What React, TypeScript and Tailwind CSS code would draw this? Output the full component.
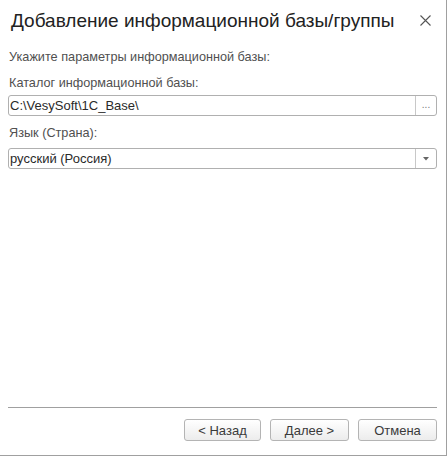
// Диалог добавления информационной базы (мастер, шаг параметров)

const font = "font-['Liberation_Sans',Arial,sans-serif]";

function WizardButton({ children, wide = 79 }: { children: React.ReactNode; wide?: number }) {
	return (
		<button
			type="button"
			className={`h-[22px] ${wide === 77 ? "w-[77px]" : "w-[79px]"} rounded-[3px] border border-[#b4b4b4] bg-gradient-to-b from-white to-[#ececec] text-[13px] leading-none text-[#3a3a3a]`}
		>
			{children}
		</button>
	);
}

function Field({
	value,
	addon,
}: {
	value: string;
	addon: React.ReactNode;
}) {
	return (
		<div className="flex h-[21px] mr-[9px] rounded-[3px] border border-[#b0b0b0] bg-white">
			<div className="flex-1 flex items-center pl-[1px] text-[13px] text-[#2a2a2a] truncate">
				{value}
			</div>
			<div className="w-[21px] flex items-center justify-center border-l border-[#c8c8c8]">
				{addon}
			</div>
		</div>
	);
}

function App() {
	return (
		<div
			className={`${font} w-[447px] h-[456px] bg-white border-r border-b border-[#a0a0a0] flex flex-col`}
		>
			<header className="h-[42px] flex items-start pl-[11px] pt-[9px] pr-[15px]">
				<h1 className="flex-1 text-[19px] leading-[24px] text-[#222]">
					Добавление информационной базы/группы
				</h1>
				<svg width="11" height="11" viewBox="0 0 11 11" className="mt-[6px]">
					<path d="M0.5 0.5 L10.5 10.5 M10.5 0.5 L0.5 10.5" stroke="#555" strokeWidth="1.1" />
				</svg>
			</header>

			<main className="flex-1 flex flex-col pl-[8px] pt-[8px] text-[12.7px] leading-[15px] text-[#505050]">
				<p className="pl-[1px]">Укажите параметры информационной базы:</p>
				<p className="pl-[1px] mt-[11px]">Каталог информационной базы:</p>
				<div className="mt-[4px]">
					<Field
						value="C:\VesySoft\1C_Base\"
						addon={<span className="text-[10px] leading-none text-[#777] pb-[2px]">...</span>}
					/>
				</div>
				<p className="pl-[1px] mt-[10px]">Язык (Страна):</p>
				<div className="mt-[7px]">
					<Field
						value="русский (Россия)"
						addon={
							<svg width="6" height="4" viewBox="0 0 6 4">
								<path d="M0 0 H6 L3 3.5 Z" fill="#666" />
							</svg>
						}
					/>
				</div>
			</main>

			<footer className="px-[9px] pb-[14px]">
				<div className="h-px bg-[#a0a0a0] -ml-[1px]" />
				<div className="mt-[11px] flex justify-end gap-[9px]">
					<WizardButton wide={77}>&lt; Назад</WizardButton>
					<WizardButton>Далее &gt;</WizardButton>
					<WizardButton>Отмена</WizardButton>
				</div>
			</footer>
		</div>
	);
}

export default App;
